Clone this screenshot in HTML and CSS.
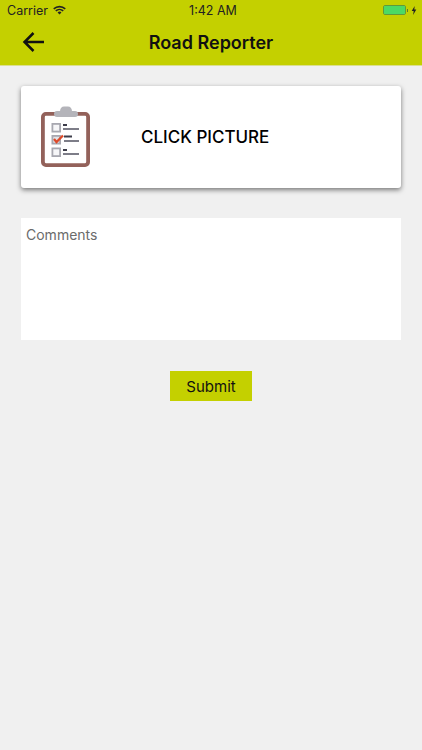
FILE: index.html
```html
<!DOCTYPE html>
<html lang="en">
<head>
  <meta charset="UTF-8" />
  <meta name="viewport" content="width=device-width, initial-scale=1.0" />
  <title>Road Reporter</title>
  <link rel="stylesheet" href="styles.css">
</head>
<body>
  <header class="topbar">
    <div class="status-bar">
      <div class="status-left">
        <span>Carrier</span>
        <svg class="wifi" width="13" height="10" viewBox="0 0 14 10">
          <path d="M0.8 3.8 A9 9 0 0 1 13.2 3.8" fill="none" stroke="#222" stroke-width="1.7"/>
          <path d="M3 6 A5.8 5.8 0 0 1 11 6" fill="none" stroke="#222" stroke-width="1.7"/>
          <path d="M4.9 7.6 A3 3 0 0 1 9.1 7.6 L7 9.9 Z" fill="#222"/>
        </svg>
      </div>
      <div class="status-time">1:42 AM</div>
      <div class="status-right">
        <div class="battery"><div class="battery-fill"></div></div>
        <div class="battery-tip"></div>
        <svg width="6" height="9" viewBox="0 0 5 9"><path d="M3.2 0 L0.2 5 H2.2 L1.6 9 L4.8 3.6 H2.8 Z" fill="#222"/></svg>
      </div>
    </div>
    <div class="navbar">
      <svg class="back" width="24" height="20" viewBox="0 0 24 20">
        <path d="M22 10 H3 M11.5 1 L2.5 10 L11.5 19" fill="none" stroke="#111" stroke-width="2.5"/>
      </svg>
      <div class="nav-title">Road Reporter</div>
    </div>
  </header>

  <main class="content">
    <div class="picture-card">
      <svg class="clipboard" width="50" height="64" viewBox="0 0 50 64">
        <rect x="1.9" y="8.9" width="45.2" height="51.2" rx="3" fill="#fff" stroke="#93615a" stroke-width="3.8"/>
        <path d="M13 9 Q13 6 16 6 H19 Q19.5 1.5 23 1.5 H27 Q30.5 1.5 31 6 H34 Q37 6 37 9 Q37 12 34 12 H16 Q13 12 13 9 Z" fill="#b4b4ba"/>
        <rect x="11.4" y="18.9" width="7.7" height="7.7" fill="#f6f6f8" stroke="#a8a8b0" stroke-width="1.8"/>
        <rect x="11.4" y="30.9" width="7.7" height="7.7" fill="#e2e2e6" stroke="#a8a8b0" stroke-width="1.8"/>
        <rect x="11.4" y="43.4" width="7.7" height="7.7" fill="#f6f6f8" stroke="#a8a8b0" stroke-width="1.8"/>
        <path d="M13 34 L15.5 37 L22 30.5" fill="none" stroke="#dd4a2a" stroke-width="2.3"/>
        <path d="M22 20 H26 M23 31.5 H31 M22 45 H26" fill="none" stroke="#3d3d4a" stroke-width="1.8"/>
        <path d="M22 24 H38 M23 36 H38 M22 49 H38" fill="none" stroke="#7d7d88" stroke-width="1.8"/>
      </svg>
      <div class="picture-label">CLICK PICTURE</div>
    </div>

    <div class="comments">Comments</div>

    <div class="submit-row">
      <div class="submit">Submit</div>
    </div>
  </main>
</body>
</html>
```

FILE: styles.css
```css
body {
  margin: 0;
  height: 750px;
  overflow: hidden;
  background-color: #f0f0f0;
  color: #000;
  font-family: Inter, "Liberation Sans", sans-serif;
}

.topbar {
  height: 65px;
  background-color: #c4d000;
  border-bottom: 1px solid #dbdf90;
}

.status-bar {
  height: 20px;
  display: flex;
  align-items: center;
  justify-content: space-between;
  padding: 0 5px 0 7px;
  font-size: 12.5px;
  color: #222;
  position: relative;
}

.status-left {
  display: flex;
  align-items: center;
  gap: 5px;
}

.wifi {
  margin-top: -1px;
}

.status-time {
  position: absolute;
  left: 4px;
  right: 0;
  text-align: center;
}

.status-right {
  display: flex;
  align-items: center;
}

.battery {
  width: 23px;
  height: 10px;
  box-sizing: border-box;
  border: 1px solid #5f9a3a;
  border-radius: 2px;
}

.battery-fill {
  height: 100%;
  background-color: #4cd964;
  border-radius: 1px;
}

.battery-tip {
  width: 1px;
  height: 3px;
  margin: 0 3px 0 1px;
  background-color: #5f7a2a;
}

.navbar {
  height: 45px;
  display: flex;
  align-items: center;
  position: relative;
}

.back {
  margin: 0 0 1px 22px;
}

.nav-title {
  position: absolute;
  left: 0;
  right: 0;
  text-align: center;
  font-size: 18px;
  font-weight: 600;
  color: #111;
}

.content {
  padding: 20px 21px 0;
}

.picture-card {
  height: 102px;
  display: flex;
  align-items: center;
  background-color: #fff;
  border-radius: 3px;
  box-shadow: 0 2px 5px rgba(0, 0, 0, 0.5);
}

.clipboard {
  margin-left: 20px;
  flex-shrink: 0;
}

.picture-label {
  margin-left: 50px;
  font-size: 17px;
  font-weight: 500;
}

.comments {
  height: 122px;
  margin-top: 30px;
  padding: 8px 5px;
  box-sizing: border-box;
  background-color: #fff;
  font-size: 14px;
  color: #6b6b6b;
}

.submit-row {
  display: flex;
  justify-content: center;
  margin-top: 31px;
}

.submit {
  width: 82px;
  height: 30px;
  display: flex;
  align-items: center;
  justify-content: center;
  background-color: #c4d000;
  font-size: 15px;
  color: #111;
}
```
